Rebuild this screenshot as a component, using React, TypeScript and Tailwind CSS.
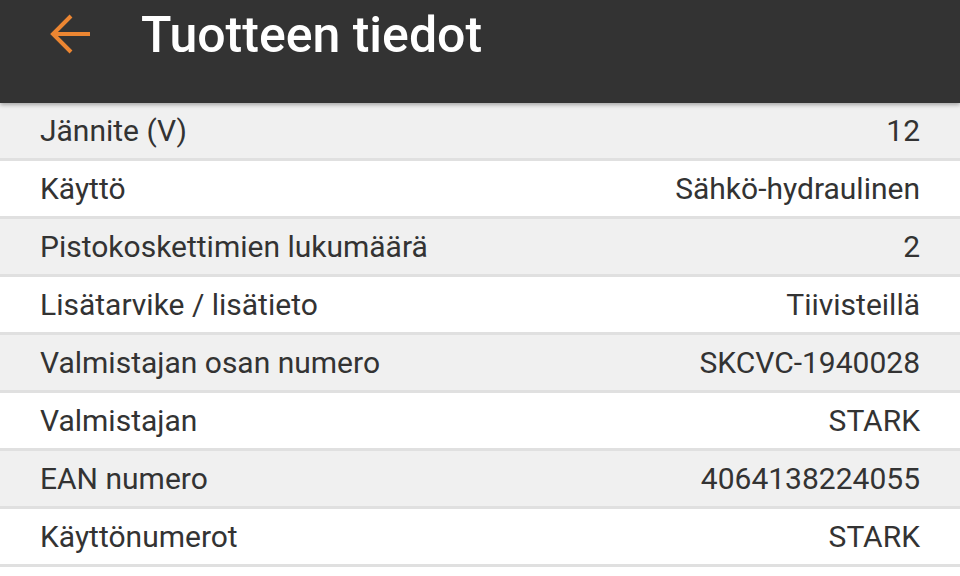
const rows: [string, string][] = [
  ['Jännite (V)', '12'],
  ['Käyttö', 'Sähkö-hydraulinen'],
  ['Pistokoskettimien lukumäärä', '2'],
  ['Lisätarvike / lisätieto', 'Tiivisteillä'],
  ['Valmistajan osan numero', 'SKCVC-1940028'],
  ['Valmistajan', 'STARK'],
  ['EAN numero', '4064138224055'],
  ['Käyttönumerot', 'STARK'],
];

export default function App() {
  return (
    <div className="w-[960px] h-[576px] overflow-hidden bg-white font-['Roboto',sans-serif]">
      <header className="relative z-10 h-[103px] bg-[#333333] flex items-start shadow-[0_2px_4px_rgba(0,0,0,0.3)]">
        <div className="h-[68px] flex items-center">
          <svg className="ml-[50px] w-[40px] h-[40px]" viewBox="0 0 40 40" fill="none" stroke="#ec8632" strokeWidth="4" strokeLinecap="butt">
            <path d="M3 20H40" />
            <path d="M21 2L3 20l18 18" />
          </svg>
          <h1 className="ml-[51px] mt-[2px] text-white text-[50px] font-medium leading-none">Tuotteen tiedot</h1>
        </div>
      </header>
      <div>
        {rows.map(([k, v], i) => (
          <div
            key={k}
            className={`h-[58px] flex items-center justify-between px-10 border-b-[3px] border-[#e0e0e0] text-[30px] text-[#333333] ${i % 2 === 0 ? 'bg-[#f0f0f0]' : 'bg-white'}`}
          >
            <span>{k}</span>
            <span>{v}</span>
          </div>
        ))}
      </div>
    </div>
  );
}
